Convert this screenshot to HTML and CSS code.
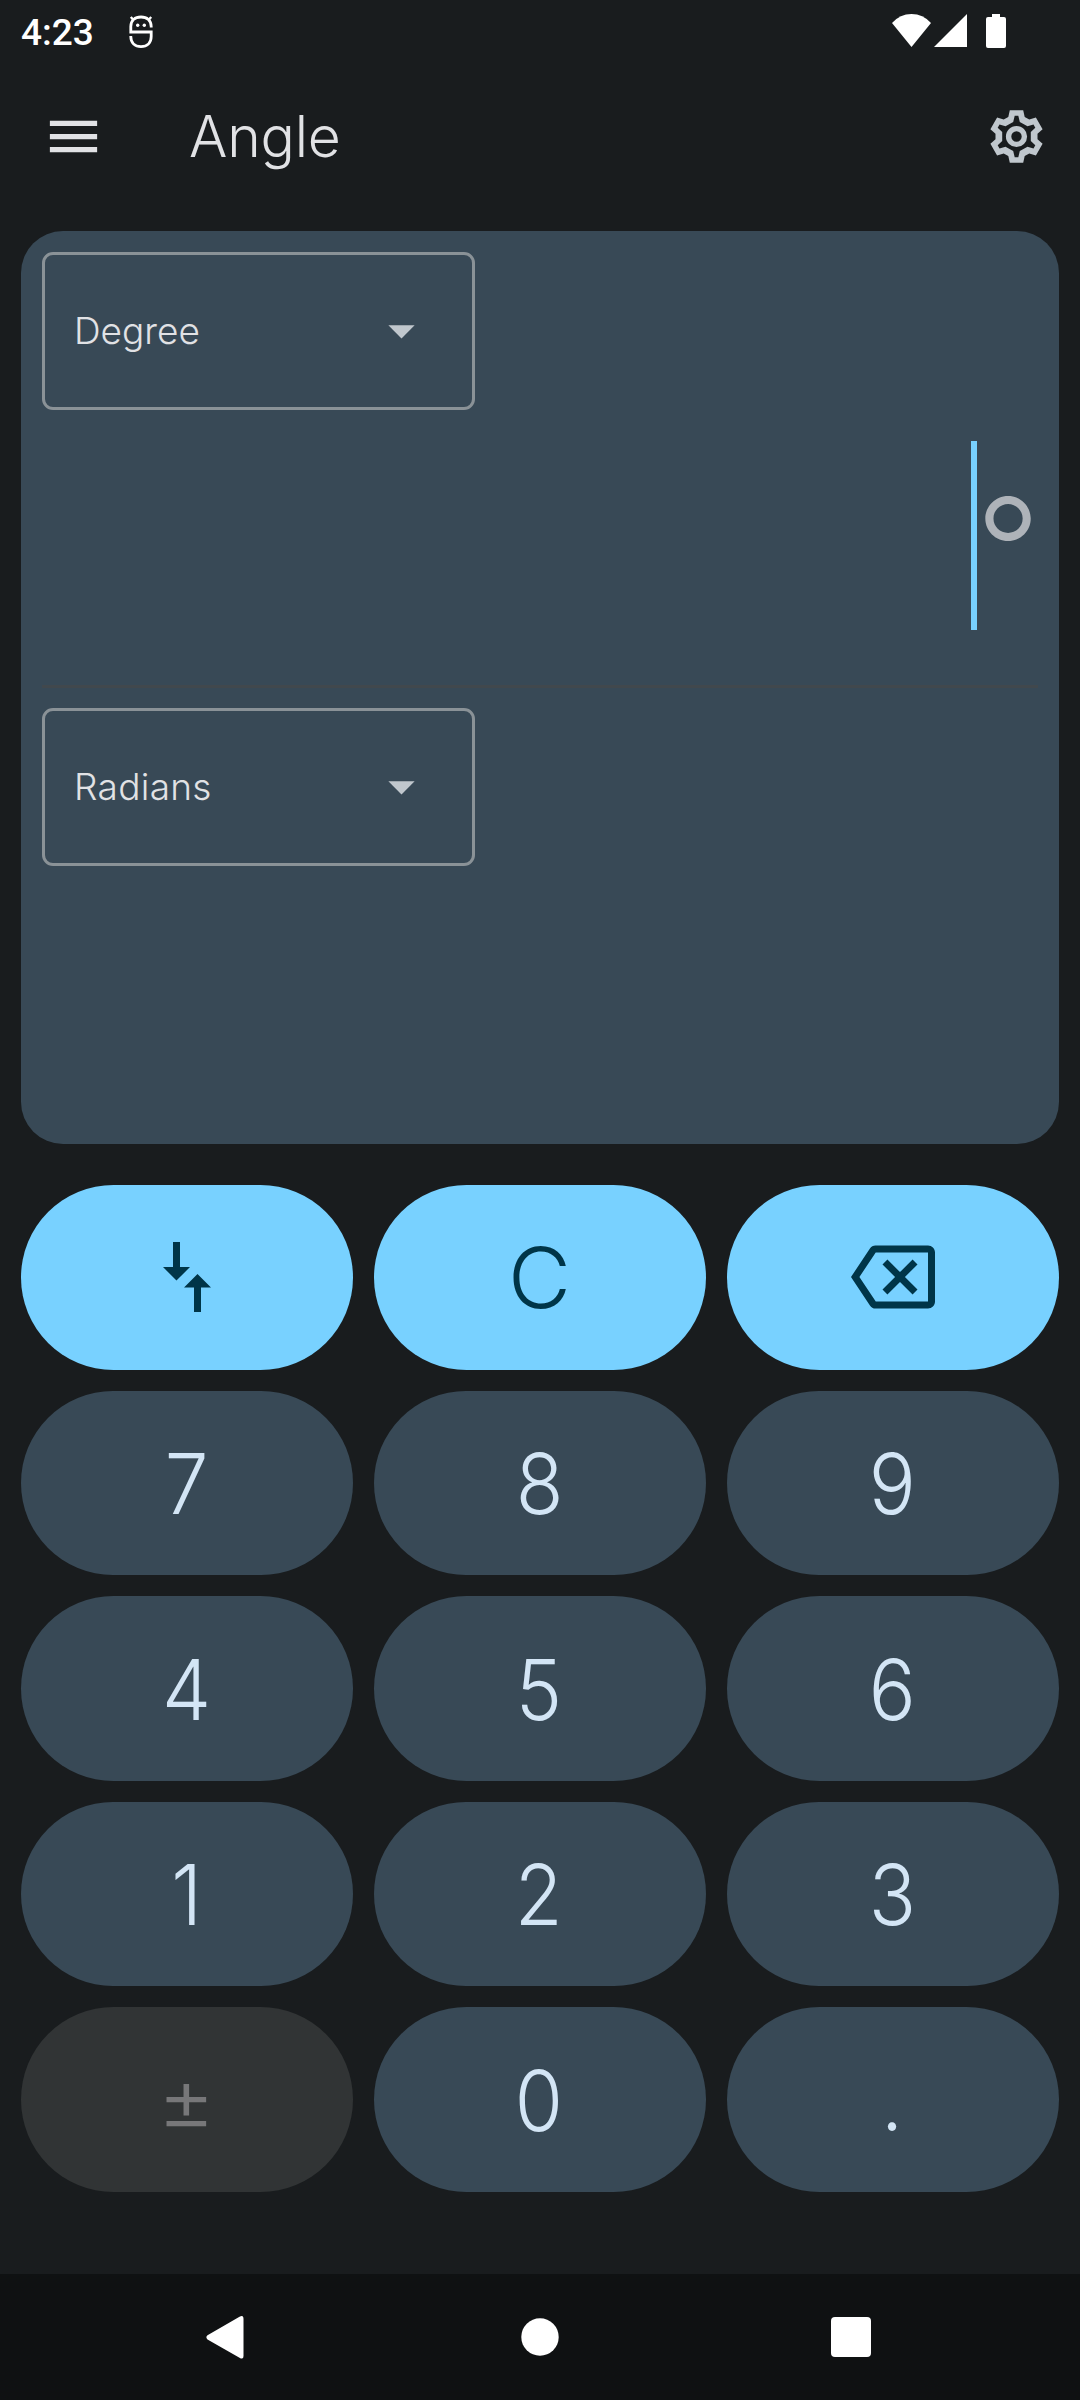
FILE: index.html
```html
<!DOCTYPE html>
<html lang="en">
<head>
<meta charset="utf-8">
<title>Angle</title>
<link rel="stylesheet" href="styles.css">
</head>
<body>
<div class="screen">
  <div class="status">
    <span class="clock">4:23</span>
    <svg class="bug" viewBox="0 0 24 34" width="24" height="34" fill="none" stroke="#fff" stroke-width="2.8">
      <path d="M22.2 12.5V11.5C22.2 5.5 18 2 12 2S1.8 5.500 1.800 11.500V17H22.200V21.500C22.200 28 18 31.600 12 31.600S1.800 28 1.800 21.500V21"/>
      <path d="M4.500 5L1.800 2M19.500 5L22.200 2" stroke-width="2.400"/>
      <circle cx="8.700" cy="10.300" r="1.700" fill="#fff" stroke="none"/><circle cx="15.300" cy="10.300" r="1.700" fill="#fff" stroke="none"/>
    </svg>
    <svg class="signals" viewBox="0 0 114 34" width="114" height="34" fill="#fff">
      <path d="M0 9Q8 0 19.500 0T39 9L19.500 33Z"/>
      <path d="M75 0V33H42Z"/>
      <path d="M100 0h8v3h4a2 2 0 0 1 2 2v27a2 2 0 0 1-2 2H96a2 2 0 0 1-2-2V5a2 2 0 0 1 2-2h4z"/>
    </svg>
  </div>
  <header class="appbar">
    <svg viewBox="0 0 24 24" width="63" height="63" fill="#e1e2e5"><path d="M3 18h18v-2H3v2zm0-5h18v-2H3v2zm0-7v2h18V6H3z"/></svg>
    <h1 class="title">Angle</h1>
    <svg viewBox="-31.5 -31.5 63 63" width="63" height="63" fill="#c0c7cd">
      <path fill-rule="evenodd" d="M-8.200-19.500L-6.700-26.300H6.700L8.200-19.500L12.800-16.900L19.400-18.950L26.100-7.350L21-2.650V2.650L26.100 7.350L19.400 18.950L12.800 16.900L8.200 19.500L6.700 26.300H-6.700L-8.200 19.500L-12.800 16.900L-19.400 18.950L-26.100 7.350L-21 2.650V-2.650L-26.100-7.350L-19.400-18.950L-12.800-16.900ZM-3.300-14.600L-1.800-20.700H1.800L3.300-14.600L11-10.150L17-11.900L18.800-8.800L14.300-4.450V4.450L18.800 8.800L17 11.900L11 10.150L3.300 14.600L1.800 20.700H-1.800L-3.300 14.600L-11 10.150L-17 11.900L-18.800 8.800L-14.300 4.450V-4.450L-18.800-8.800L-17-11.900L-11-10.150Z"/>
      <circle r="7.900" fill="none" stroke="#c0c7cd" stroke-width="5.400"/>
    </svg>
  </header>
  <main class="card">
    <div class="field"><span class="label degree">Degree</span><svg viewBox="0 0 24 24" width="63" height="63" fill="#c0c7cd"><path d="M7 10l5 5 5-5z"/></svg></div>
    <div class="entry"><i class="caret"></i><span class="unit">°</span></div>
    <div class="divider"></div>
    <div class="field"><span class="label radians">Radians</span><svg viewBox="0 0 24 24" width="63" height="63" fill="#c0c7cd"><path d="M7 10l5 5 5-5z"/></svg></div>
  </main>
  <div class="keys">
    <button class="key action"><svg viewBox="0 0 48 70" width="48" height="70" fill="#003548"><path d="M10 0h7v25h10L13.500 38.600 0 25h10zM31 70h7V45.500h10L34.500 32 21 45.500h10z"/></svg></button>
    <button class="key action"><span class="wide">C</span></button>
    <button class="key action"><svg viewBox="0 0 24 24" width="84" height="84" fill="#003548"><path d="M22 3H7c-.69 0-1.230.350-1.590.880L0 12l5.410 8.110c.360.530.900.890 1.590.890h15c1.100 0 2-.900 2-2V5c0-1.100-.900-2-2-2zm0 16H7.070L2.400 12l4.660-7H22v14zm-11.590-2L14 13.410 17.590 17 19 15.590 15.410 12 19 8.410 17.590 7 14 10.590 10.410 7 9 8.410 12.590 12 9 15.590z"/></svg></button>
    <button class="key"><span>7</span></button><button class="key"><span>8</span></button><button class="key"><span>9</span></button>
    <button class="key"><span>4</span></button><button class="key"><span>5</span></button><button class="key"><span>6</span></button>
    <button class="key"><span>1</span></button><button class="key"><span>2</span></button><button class="key"><span>3</span></button>
    <button class="key off" disabled><span class="sign">±</span></button><button class="key"><span>0</span></button><button class="key"><span>.</span></button>
  </div>
  <nav class="navbar">
    <svg viewBox="0 0 38 43" width="38" height="43" fill="#fff"><path d="M33.500.800Q37.500-1.500 37.500 3V40Q37.500 44 33.500 41.700L1.500 23.500Q-.800 21.300 1.500 19.200Z"/></svg>
    <svg class="home" viewBox="0 0 38 38" width="38" height="38" fill="#fff"><circle cx="19" cy="19" r="18.700"/></svg>
    <svg viewBox="0 0 40 40" width="40" height="40" fill="#fff"><rect width="40" height="40" rx="4"/></svg>
  </nav>
</div>
</body>
</html>
```
FILE: styles.css
```css
* { box-sizing: border-box; }
body { margin: 0; background: #191c1e; }
svg { display: block; flex: none; }
.screen {
  width: 1080px;
  height: 2400px;
  display: flex;
  flex-direction: column;
  background: #191c1e;
  color: #e1e2e5;
  font-family: Inter, "Open Sans", sans-serif;
  font-weight: 360;
}
.status {
  height: 63px;
  display: flex;
  align-items: flex-start;
  padding: 14px 74px 0 21px;
  color: #fff;
}
.clock { width: 108px; font: 500 37px/38px Roboto, sans-serif; }
.bug { margin-top: 1px; }
.signals { margin-left: auto; }
.appbar {
  height: 168px;
  display: flex;
  align-items: center;
  padding: 0 32px 21px 42px;
}
.title {
  flex: 1;
  margin: 0 0 0 84px;
  font-size: 57px;
  line-height: 64px;
  font-weight: 360;
  letter-spacing: -.2px;
}
.card {
  height: 912.5px;
  margin: 0 21px;
  padding: 21px;
  border-radius: 42px;
  background: #384956;
}
.field {
  width: 433px;
  height: 157.5px;
  display: flex;
  align-items: center;
  justify-content: space-between;
  padding: 0 39.500px 0 29px;
  border: 3px solid #8a9297;
  border-radius: 11px;
}
.label { font-size: 37px; line-height: 48px; }
.radians { letter-spacing: .3px; }
.entry {
  height: 275.500px;
  display: flex;
  justify-content: flex-end;
  padding: 31px 0 0;
}
.caret { width: 5.500px; height: 189px; background: #78d1ff; }
.unit { width: 61.500px; padding: 13px 3px 0 0; color: #aeb3b9; font-size: 143px; line-height: 189px; text-align: center; text-indent: -1px; }
.divider { height: 3px; margin-bottom: 20px; background: #41484d; }
.keys {
  height: 1006.500px;
  margin: 41.500px 21px 0;
  display: grid;
  grid-template-columns: repeat(3, 1fr);
  grid-template-rows: repeat(5, 1fr);
  gap: 21px;
}
.key {
  display: flex;
  align-items: center;
  justify-content: center;
  padding: 0;
  border: 0;
  border-radius: 93px;
  background: #384956;
  color: #d3e5f5;
  font: inherit;
  font-size: 84px;
}
.key span { padding: 3px 1.500px 0 0; line-height: 100px; transform: scaleX(.93); }
.key .wide { padding: 1px 1.500px 0 0; transform: scaleX(1.03); }
.key .sign { padding-top: 1px; transform: scaleX(1.06); }
.action { background: #78d1ff; color: #003548; }
.off { background: #313435; color: #777779; }
.navbar {
  height: 126px;
  margin-top: auto;
  display: flex;
  align-items: center;
  justify-content: space-between;
  padding: 0 209px 0 206px;
  background: #0f1112;
}
.home { margin-left: 4px; }
```
